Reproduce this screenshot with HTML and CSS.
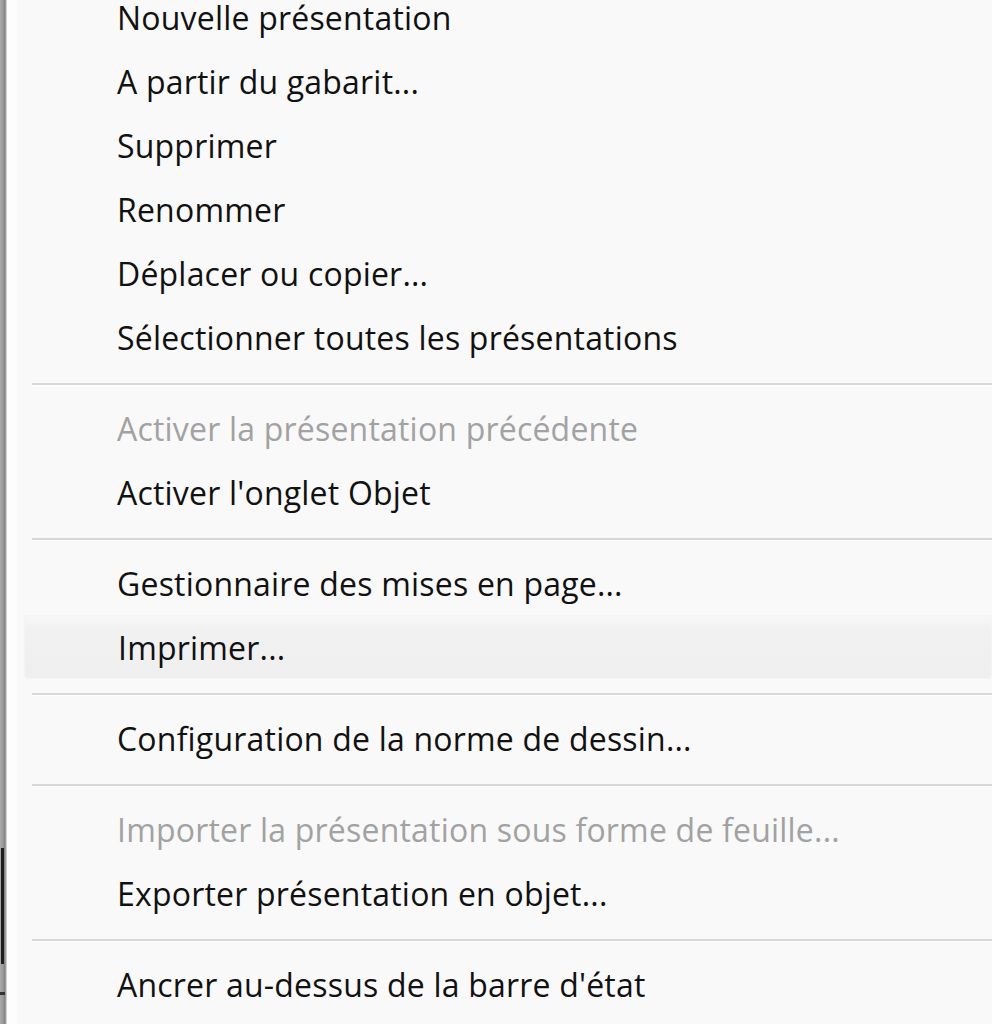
FILE: index.html
```html
<!DOCTYPE html>
<html lang="fr">
<head>
<meta charset="utf-8">
<title>Menu</title>
<link rel="stylesheet" href="styles.css">
</head>
<body>
<div class="frame">
  <div class="edge"><div class="edge-mark"></div><div class="edge-tick"></div></div>
  <div class="gutter"></div>
  <ul class="menu">
    <li class="item">Nouvelle présentation</li>
    <li class="item">A partir du gabarit...</li>
    <li class="item">Supprimer</li>
    <li class="item">Renommer</li>
    <li class="item">Déplacer ou copier...</li>
    <li class="item">Sélectionner toutes les présentations</li>
    <li class="sep"></li>
    <li class="item disabled">Activer la présentation précédente</li>
    <li class="item">Activer l'onglet Objet</li>
    <li class="sep"></li>
    <li class="item">Gestionnaire des mises en page...</li>
    <li class="item hover">Imprimer...</li>
    <li class="sep"></li>
    <li class="item">Configuration de la norme de dessin...</li>
    <li class="sep"></li>
    <li class="item disabled">Importer la présentation sous forme de feuille...</li>
    <li class="item">Exporter présentation en objet...</li>
    <li class="sep"></li>
    <li class="item">Ancrer au-dessus de la barre d'état</li>
  </ul>
</div>
</body>
</html>
```
FILE: styles.css
```css
html, body {
  margin: 0;
  padding: 0;
  background: #f9f9f9;
}
body {
  width: 992px;
  height: 1024px;
  overflow: hidden;
  font-family: "Open Sans", "Noto Sans", "Liberation Sans", sans-serif;
}
.frame {
  display: flex;
  height: 1024px;
}
.edge {
  width: 7px;
  flex: none;
  background: linear-gradient(to right, #a9a9a9 0, #9a9a9a 3px, #7f7f7f 5px, #b8b8b8 6px, #e4e4e4 7px);
  display: flex;
  flex-direction: column;
}
.edge-mark {
  margin-top: 848px;
  width: 3px;
  margin-left: 1px;
  height: 116px;
  background: #1e1e1e;
}
.edge-tick {
  margin-top: 28px;
  width: 5px;
  height: 3px;
  background: #333;
}
.gutter {
  width: 10px;
  flex: none;
  background: #fdfdfd;
}
.menu {
  list-style: none;
  margin: -15px 0 0 0;
  padding: 0 0 0 7px;
  flex: 1;
}
.item {
  height: 64px;
  box-sizing: border-box;
  display: flex;
  align-items: center;
  padding-left: 93px;
  font-size: 32px;
  color: #111111;
  white-space: nowrap;
  letter-spacing: 0.2px;
}
.item.disabled {
  color: #a2a2a2;
}
.item.hover {
  background: linear-gradient(to bottom, #f7f7f7 0, #f1f1f1 14px, #efefef 100%);
  border: 1px solid #f4f4f4;
  border-radius: 4px;
}
.sep {
  height: 27px;
  box-sizing: border-box;
  padding-top: 4px;
  display: flex;
  align-items: center;
  padding-left: 8px;
}
.sep::before {
  content: "";
  display: block;
  flex: 1;
  height: 2px;
  background: #d8d8d8;
  border-bottom: 1px solid #ffffff;
}
```
